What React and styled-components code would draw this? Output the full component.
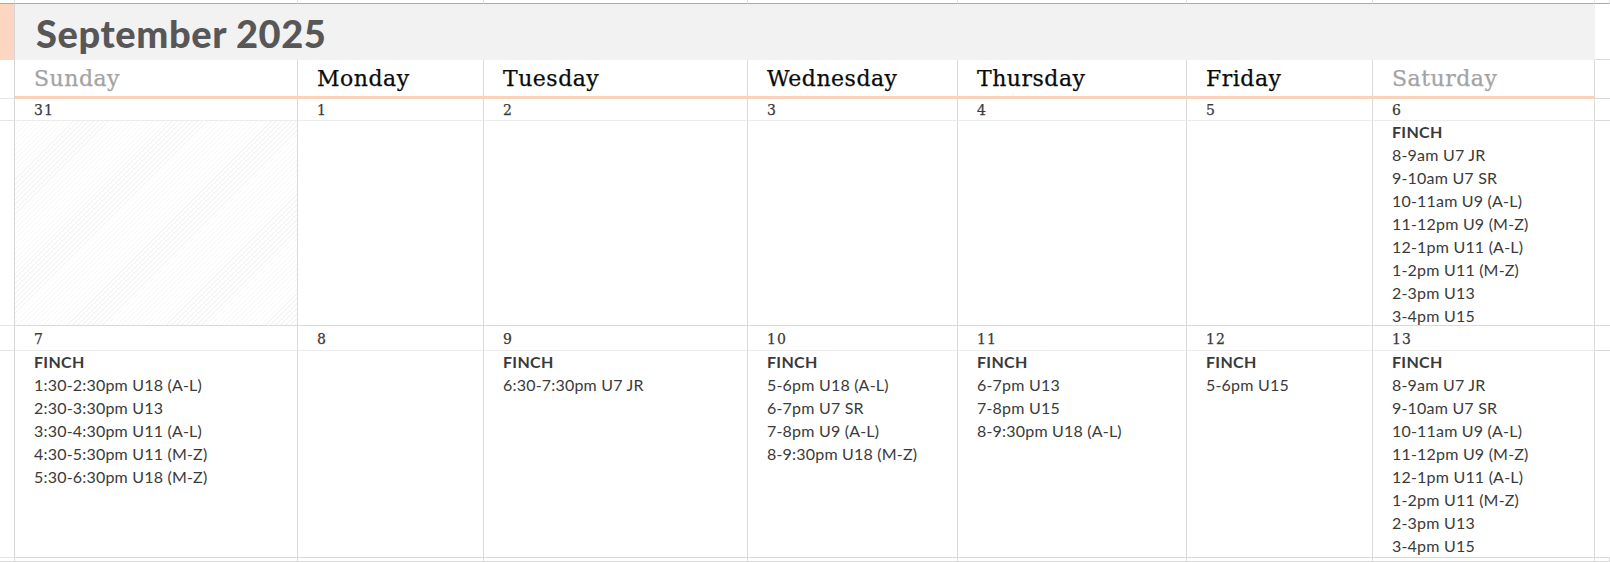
import React from 'react';
import styled, { createGlobalStyle, css } from 'styled-components';

const GlobalStyle = createGlobalStyle`
  html, body {
    margin: 0;
    padding: 0;
    background: #fff;
  }
`;

const COLS = '15px 283px 186px 264px 210px 229px 186px 222px 15px';
const ROWS = '4px 56px 39px 22px 205px 25px 207px 4px';

const Sheet = styled.div`
  display: grid;
  grid-template-columns: ${COLS};
  grid-template-rows: ${ROWS};
  width: 1610px;
  height: 562px;
  overflow: hidden;
  font-family: 'Lato', 'Liberation Sans', sans-serif;
`;

const Cell = styled.div`
  box-sizing: border-box;
  border-right: 1px solid #dadada;
  border-bottom: 1px solid ${(p) => p.$line || '#dadada'};
  min-width: 0;
  overflow: hidden;
`;

const TopCell = styled(Cell)`
  border-bottom: 1px solid #a9a9a9;
  border-right-color: #e3e3e3;
`;

const Gutter = styled(Cell)`
  background: ${(p) => (p.$accent ? '#fcd6c1' : '#fff')};
  border-right: 1px solid #d6d6d6;
  border-bottom-color: ${(p) => (p.$accent ? '#fcd6c1' : p.$line || '#e6e6e6')};
`;

const Tail = styled(Cell)`
  border-right: none;
  border-bottom-color: #dadada;
`;

const TitleCell = styled.div`
  grid-column: span 7;
  background: #f2f2f2;
  display: flex;
  align-items: center;
  padding-left: 21px;
  box-sizing: border-box;
`;

const Title = styled.h1`
  margin: 0;
  font-family: 'Lato', 'Liberation Sans', sans-serif;
  font-weight: 900;
  font-size: 38px;
  color: #575757;
  letter-spacing: 0.6px;
  line-height: 1;
  padding-top: 2px;
`;

const HeaderCell = styled(Cell)`
  display: flex;
  align-items: center;
  padding-left: 19px;
  border-bottom: 3px solid #fad2bc;
  font-family: 'DejaVu Serif', 'Liberation Serif', serif;
  font-size: 22px;
  letter-spacing: 0.5px;
  -webkit-text-stroke: 0.25px currentColor;
  color: ${(p) => (p.$weekend ? '#a3a3a3' : '#0a0a0a')};
  padding-top: 1px;
`;

const DateCell = styled(Cell)`
  display: flex;
  align-items: center;
  padding-left: 19px;
  padding-top: 1px;
  border-bottom-color: #ececec;
  font-family: 'DejaVu Serif', 'Liberation Serif', serif;
  font-size: 14px;
  letter-spacing: 1px;
  -webkit-text-stroke: 0.25px currentColor;
  color: #3a3a3a;
`;

const hatch = css`
  background: repeating-linear-gradient(
    135deg,
    #ffffff 0px,
    #ffffff 2.5px,
    #f6f6f6 2.5px,
    #f6f6f6 3.5px
  );
`;

const DayCell = styled(Cell)`
  padding: 0 8px 0 19px;
  ${(p) => p.$hatched && hatch}
`;

const Venue = styled.div`
  margin-top: -1px;
  font-weight: 700;
  font-size: 16px;
  line-height: 23px;
  color: #3a3a3a;
  letter-spacing: 0.3px;
`;

const Slot = styled.div`
  font-size: 16px;
  line-height: 23px;
  color: #3a3a3a;
  white-space: nowrap;
  letter-spacing: 0.2px;
`;

const DAYS = ['Sunday', 'Monday', 'Tuesday', 'Wednesday', 'Thursday', 'Friday', 'Saturday'];

const SATURDAY = [
  '8-9am U7 JR',
  '9-10am U7 SR',
  '10-11am U9 (A-L)',
  '11-12pm U9 (M-Z)',
  '12-1pm U11 (A-L)',
  '1-2pm U11 (M-Z)',
  '2-3pm U13',
  '3-4pm U15',
];

const WEEKS = [
  [
    { date: 31, hatched: true },
    { date: 1 },
    { date: 2 },
    { date: 3 },
    { date: 4 },
    { date: 5 },
    { date: 6, slots: SATURDAY },
  ],
  [
    {
      date: 7,
      slots: [
        '1:30-2:30pm U18 (A-L)',
        '2:30-3:30pm U13',
        '3:30-4:30pm U11 (A-L)',
        '4:30-5:30pm U11 (M-Z)',
        '5:30-6:30pm U18 (M-Z)',
      ],
    },
    { date: 8 },
    { date: 9, slots: ['6:30-7:30pm U7 JR'] },
    { date: 10, slots: ['5-6pm U18 (A-L)', '6-7pm U7 SR', '7-8pm U9 (A-L)', '8-9:30pm U18 (M-Z)'] },
    { date: 11, slots: ['6-7pm U13', '7-8pm U15', '8-9:30pm U18 (A-L)'] },
    { date: 12, slots: ['5-6pm U15'] },
    { date: 13, slots: SATURDAY },
  ],
];

const Week = ({ days }) => (
  <>
    <Gutter $line="#e6e6e6" />
    {days.map((d) => (
      <DateCell key={'d' + d.date}>{d.date}</DateCell>
    ))}
    <Tail />
    <Gutter />
    {days.map((d) => (
      <DayCell key={'c' + d.date} $hatched={d.hatched}>
        {d.slots && (
          <>
            <Venue>FINCH</Venue>
            {d.slots.map((s) => (
              <Slot key={s}>{s}</Slot>
            ))}
          </>
        )}
      </DayCell>
    ))}
    <Tail />
  </>
);

export default function App() {
  return (
    <>
      <GlobalStyle />
      <Sheet>
        {Array.from({ length: 9 }).map((_, i) => (
          <TopCell key={'t' + i} />
        ))}

        <Gutter $accent />
        <TitleCell>
          <Title>September 2025</Title>
        </TitleCell>
        <Tail />

        <Gutter />
        {DAYS.map((d, i) => (
          <HeaderCell key={d} $weekend={i === 0 || i === 6}>
            {d}
          </HeaderCell>
        ))}
        <Tail />

        {WEEKS.map((w, i) => (
          <Week key={i} days={w} />
        ))}

        {Array.from({ length: 9 }).map((_, i) => (
          <Cell key={'b' + i} />
        ))}
      </Sheet>
    </>
  );
}
